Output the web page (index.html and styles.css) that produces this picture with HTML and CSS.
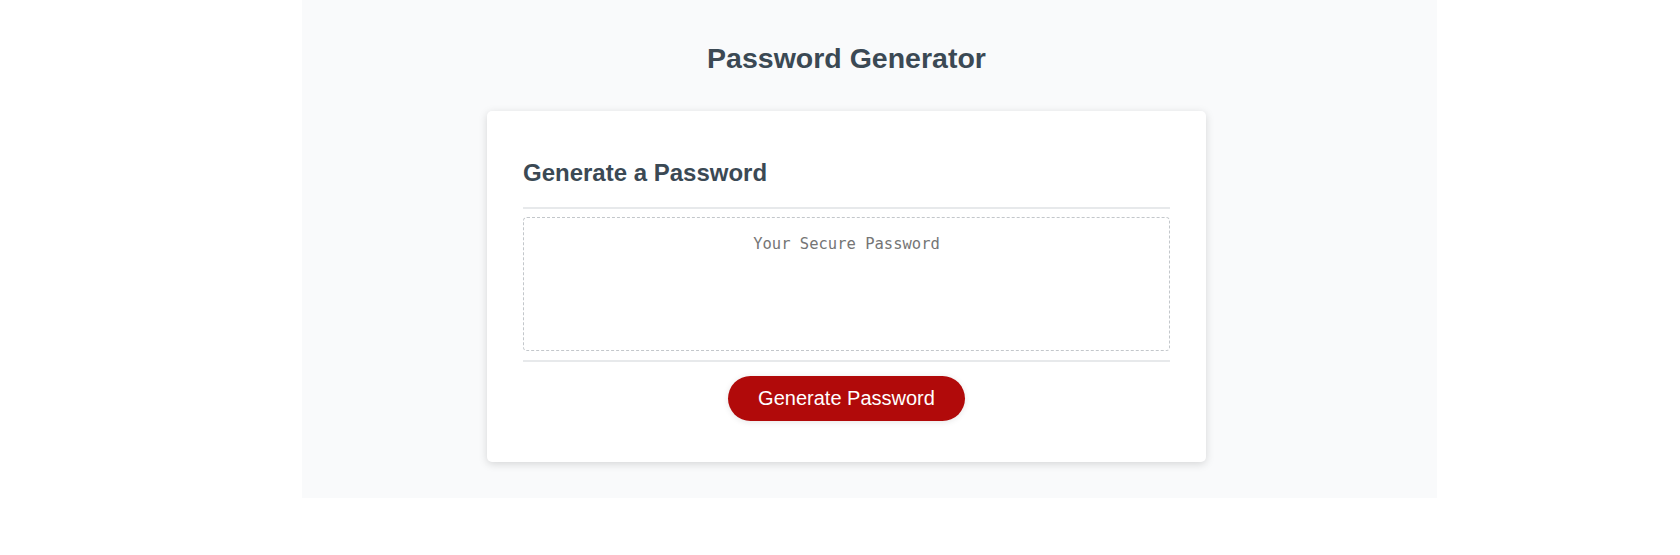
FILE: index.html
```html
<!DOCTYPE html>
<html lang="en">
<head>
<meta charset="utf-8">
<title>Password Generator</title>
<link rel="stylesheet" href="styles.css">
</head>
<body>
<div class="wrapper">
  <header class="page-header">
    <h1 class="page-title">Password Generator</h1>
  </header>
  <div class="card">
    <div class="card-header">
      <h2 class="card-title">Generate a Password</h2>
    </div>
    <div class="card-body">
      <textarea class="password" readonly placeholder="Your Secure Password" aria-label="Generated Password"></textarea>
    </div>
    <div class="card-footer">
      <button class="btn" type="button">Generate Password</button>
    </div>
  </div>
</div>
</body>
</html>
```

FILE: styles.css
```css
*, *::before, *::after {
  box-sizing: border-box;
}

html, body {
  margin: 0;
  padding: 0;
  background: #ffffff;
  font-family: "Liberation Sans", Arial, sans-serif;
}

.wrapper {
  width: 1135px;
  margin-left: 302px;
  height: 498px;
  background: #f9fafb;
  padding: 41px 231px 0 185px;
}

.page-header {
  text-align: center;
  color: hsl(206, 17%, 28%);
}

.page-title {
  margin: 0;
  font-size: 28.5px;
  line-height: 34px;
  font-weight: 700;
}

.card {
  margin-top: 36px;
  width: 719px;
  background: #ffffff;
  border-radius: 5px;
  box-shadow: rgba(0, 0, 0, 0.15) 0 2px 8px 0;
  color: hsl(206, 17%, 28%);
  padding: 48px 36px 41px;
}

.card-header::after {
  content: "";
  display: block;
  height: 2px;
  margin-top: 20px;
  background: #e7e9eb;
}

.card-title {
  margin: 0;
  font-size: 24px;
  line-height: 28px;
  font-weight: 700;
}

.card-body {
  padding: 8px 0 9px;
}

.password {
  display: block;
  width: 100%;
  height: 134px;
  margin: 0;
  padding: 16px 15px 0;
  border: 1px dashed #c3c7cb;
  border-radius: 4px;
  resize: none;
  overflow: hidden;
  background: #ffffff;
  font-family: "DejaVu Sans Mono", "Liberation Mono", monospace;
  font-size: 15.5px;
  line-height: 20px;
  text-align: center;
  color: #333;
  outline: none;
}

.password::placeholder {
  color: #757575;
}

.card-footer {
  text-align: center;
}

.card-footer::before {
  content: "";
  display: block;
  height: 2px;
  background: #e7e9eb;
}

.btn {
  display: inline-block;
  margin-top: 14px;
  border: none;
  border-radius: 23px;
  background: #b10a0a;
  color: #ffffff;
  font-family: "Liberation Sans", Arial, sans-serif;
  font-size: 20px;
  line-height: 23px;
  height: 45px;
  padding: 11px 30px;
  cursor: pointer;
  box-shadow: rgba(0, 0, 0, 0.1) 0 1px 6px 0;
}
```
